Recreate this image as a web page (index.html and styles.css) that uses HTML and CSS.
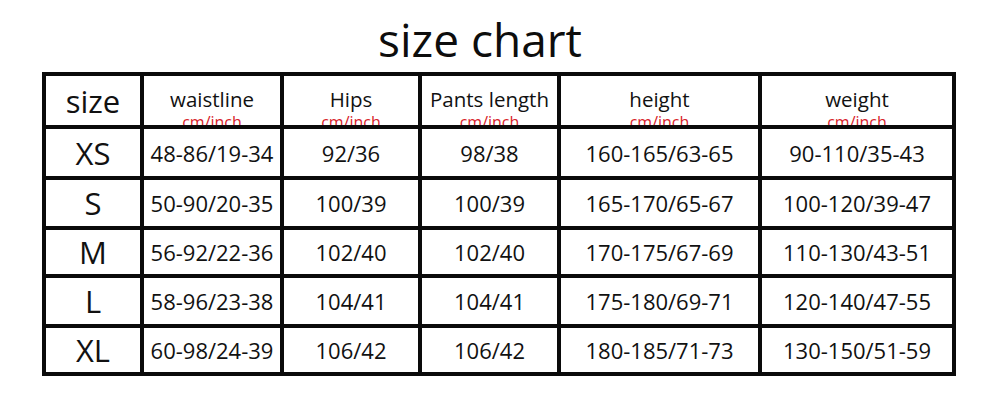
FILE: index.html
```html
<!DOCTYPE html>
<html lang="en">
<head>
<meta charset="utf-8">
<title>size chart</title>
<link rel="stylesheet" href="styles.css">
</head>
<body>
<h1 class="title">size chart</h1>
<div class="chart">
  <div class="cell head size-col">size</div>
  <div class="cell head"><span class="label">waistline</span><span class="unit">cm/inch</span></div>
  <div class="cell head"><span class="label">Hips</span><span class="unit">cm/inch</span></div>
  <div class="cell head"><span class="label">Pants length</span><span class="unit">cm/inch</span></div>
  <div class="cell head"><span class="label">height</span><span class="unit">cm/inch</span></div>
  <div class="cell head"><span class="label">weight</span><span class="unit">cm/inch</span></div>

  <div class="cell size-col">XS</div>
  <div class="cell">48-86/19-34</div>
  <div class="cell">92/36</div>
  <div class="cell">98/38</div>
  <div class="cell">160-165/63-65</div>
  <div class="cell">90-110/35-43</div>

  <div class="cell size-col">S</div>
  <div class="cell">50-90/20-35</div>
  <div class="cell">100/39</div>
  <div class="cell">100/39</div>
  <div class="cell">165-170/65-67</div>
  <div class="cell">100-120/39-47</div>

  <div class="cell size-col">M</div>
  <div class="cell">56-92/22-36</div>
  <div class="cell">102/40</div>
  <div class="cell">102/40</div>
  <div class="cell">170-175/67-69</div>
  <div class="cell">110-130/43-51</div>

  <div class="cell size-col">L</div>
  <div class="cell">58-96/23-38</div>
  <div class="cell">104/41</div>
  <div class="cell">104/41</div>
  <div class="cell">175-180/69-71</div>
  <div class="cell">120-140/47-55</div>

  <div class="cell size-col">XL</div>
  <div class="cell">60-98/24-39</div>
  <div class="cell">106/42</div>
  <div class="cell">106/42</div>
  <div class="cell">180-185/71-73</div>
  <div class="cell">130-150/51-59</div>
</div>
</body>
</html>
```

FILE: styles.css
```css
html, body {
  margin: 0;
  padding: 0;
  background: #ffffff;
}

body {
  font-family: "Open Sans", "Noto Sans", "Liberation Sans", sans-serif;
  color: #111111;
  width: 1000px;
  height: 408px;
  overflow: hidden;
}

.title {
  margin: 0;
  padding: 9px 40px 0 0;
  height: 60px;
  line-height: 60px;
  font-size: 46px;
  font-weight: 400;
  text-align: center;
  color: #0d0d0d;
}

.chart {
  margin: 3px 0 0 42px;
  width: 906px;
  padding: 4px;
  background: #0a0a0a;
  display: grid;
  grid-template-columns: 94px 136px 134px 135px 197px 190px;
  grid-template-rows: 49px 47px 46px 44px 46px 44px;
  gap: 4px;
}

.cell {
  background: #ffffff;
  display: flex;
  align-items: center;
  justify-content: center;
  font-size: 22px;
  white-space: nowrap;
}

.size-col {
  font-size: 31px;
}

.head {
  position: relative;
  overflow: hidden;
  flex-direction: column;
  justify-content: flex-start;
  padding-top: 11px;
  box-sizing: border-box;
}

.head.size-col {
  justify-content: center;
  padding-top: 0;
}

.label {
  font-size: 20.5px;
  line-height: 24px;
}

.unit {
  position: absolute;
  left: 0;
  right: 0;
  top: 38px;
  text-align: center;
  font-size: 16px;
  line-height: 16px;
  color: #d8222a;
}
```
